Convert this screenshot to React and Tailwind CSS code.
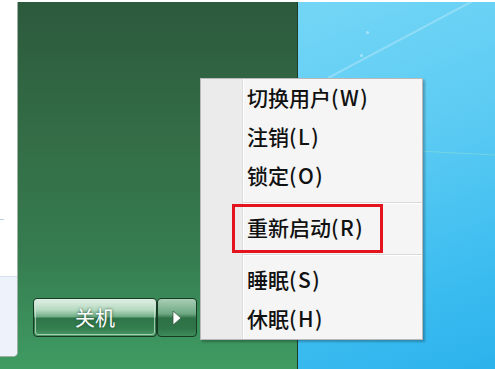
import React from 'react';

const ITEMS_A = [['切换用户', '(W)'], ['注销', '(L)'], ['锁定', '(O)']];
const ITEMS_C = [['睡眠', '(S)'], ['休眠', '(H)']];

const MenuItem = ({ label, keyHint }) => (
  <div className="h-[39px] flex items-center pl-[46px] pb-[2px] text-[21px] leading-none text-[#111] font-medium">
    <span>{label}</span>
    <span className="tracking-[1.5px]">{keyHint}</span>
  </div>
);

const Separator = () => (
  <div className="h-[13px] flex items-center pl-[42px]">
    <div className="w-full border-t border-[#d9d9d9] border-b-white border-b" />
  </div>
);

const App = () => {
  return (
    <div
      className="relative w-[495px] h-[369px] overflow-hidden flex flex-col bg-white"
      style={{ fontFamily: '"Noto Sans CJK SC", "Noto Sans", sans-serif' }}
    >
      <div className="h-[2px] bg-white" />
      <div className="flex-1 flex">
        {/* start menu green pane */}
        <div className="w-[298px] flex bg-[linear-gradient(180deg,#2c5a3c_0%,#336c46_35%,#367d50_70%,#3f9c63_100%)] border-r border-[#1d3d28]">
          <div className="w-[18px] h-[355px] flex flex-col rounded-br-[5px] bg-white border-r border-b border-[#9fb0a4] overflow-hidden">
            <div className="h-[217px]" />
            <div className="h-px w-[4px] bg-[#b8cce8]" />
            <div className="h-[56px]" />
            <div className="flex-1 bg-[#eef2fb] border-t border-[#d6dff0]" />
          </div>
          <div className="flex-1 flex flex-col justify-end pl-[15px] pb-[32px]">
            <div className="flex h-[39px]">
              <div className="w-[124px] h-full rounded-[4px] border border-[#173a25] p-px bg-[linear-gradient(180deg,#e3f1e7_0%,#b4d8bf_30%,#6fae85_48%,#2f7449_52%,#34804f_80%,#4b9a66_100%)]">
                <div className="w-full h-full rounded-[3px] border border-[#cfe7d6]/70 flex items-center justify-center text-[20px] text-white [text-shadow:0_0_3px_#1e4d30]">
                  关机
                </div>
              </div>
              <div className="w-[40px] h-full rounded-[4px] border border-[#173a25] bg-[linear-gradient(180deg,#a8cfb4_0%,#6ea883_40%,#2f7046_52%,#2f7649_80%,#3f8c5a_100%)] flex items-center justify-center">
                <svg width="12" height="16" viewBox="0 0 12 16">
                  <path d="M2 1 L10 8 L2 15 Z" fill="#ffffff" stroke="#3a5a45" strokeWidth="0.8" />
                </svg>
              </div>
            </div>
          </div>
        </div>
        {/* desktop */}
        <div className="flex-1 relative bg-[linear-gradient(160deg,#74d6f6_0%,#5ccbf3_40%,#3dbdf0_75%,#2cb2ec_100%)] overflow-hidden">
          <div className="absolute left-[30px] top-[75px] w-[260px] h-[2px] bg-white/25 -rotate-[28deg] origin-left" />
          <div className="absolute left-[110px] top-[148px] w-[120px] h-px bg-[#9fe6c8]/40 rotate-[3deg] origin-left" />
          <div className="absolute left-[68px] top-[29px] w-[3px] h-[3px] rounded-full bg-white/40" />
          <div className="absolute left-[62px] top-[52px] w-[3px] h-[3px] rounded-full bg-white/40" />
        </div>
      </div>

      {/* popup menu */}
      <div className="absolute left-[200px] top-[78px] w-[223px] h-[262px] border border-[#b9b9b9] bg-[#f5f5f5] shadow-[2px_2px_2px_rgba(0,0,0,0.25)] flex flex-col">
        <div className="absolute left-0 top-0 bottom-0 w-[42px] bg-[#ebebeb] border-r border-[#dedede]" />
        <div className="absolute left-[42px] top-0 bottom-0 w-px bg-white" />
        <div className="relative flex flex-col">
          {ITEMS_A.map(([t, k]) => (
            <MenuItem key={t} label={t} keyHint={k} />
          ))}
          <Separator />
          <MenuItem label="重新启动" keyHint="(R)" />
          <Separator />
          {ITEMS_C.map(([t, k]) => (
            <MenuItem key={t} label={t} keyHint={k} />
          ))}
        </div>
        <div className="absolute left-[31px] top-[125px] w-[151px] h-[49px] border-[3px] border-[#e3141e]" />
      </div>
    </div>
  );
};

export default App;
